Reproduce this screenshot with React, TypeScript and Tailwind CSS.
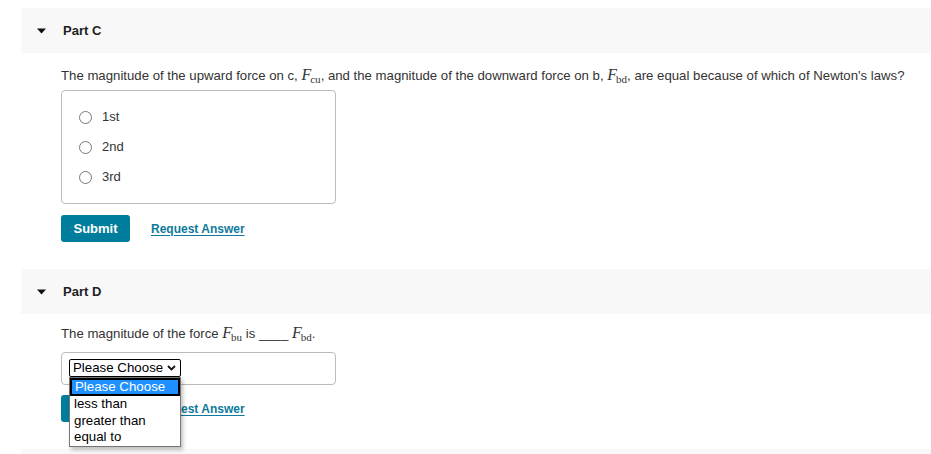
import React from "react";

const Caret = () => (
  <svg width="9" height="6" viewBox="0 0 9 6" className="shrink-0">
    <path d="M0 0.5 H9 L4.5 5.5 Z" fill="#111" />
  </svg>
);

// italic F with roman subscript, like the MathJax rendering
const F = ({ sub }: { sub: string }) => (
  <span className="font-['Liberation_Serif',serif] italic text-[16px]">
    F
    <sub className="not-italic text-[11px] -bottom-[0.25em] -ml-[1px]">{sub}</sub>
  </span>
);

const PartHeader = ({ label }: { label: string }) => (
  <div className="ml-[21px] h-[45px] bg-[#f8f8f8] flex items-center">
    <div className="ml-[16px] mr-[17px] flex">
      <Caret />
    </div>
    <span className="text-[13px] font-bold text-[#222]">{label}</span>
  </div>
);

const Actions = () => (
  <div className="flex items-center">
    <button className="w-[69px] h-[27px] rounded-[3px] bg-[#007c9d] text-white text-[13px] font-bold">
      Submit
    </button>
    <a className="ml-[21px] text-[12px] font-bold text-[#0d7a9b] underline underline-offset-[2px]">
      Request Answer
    </a>
  </div>
);

const Radio = ({ label }: { label: string }) => (
  <label className="h-[30px] flex items-center pl-[17px]">
    <span className="w-[13px] h-[13px] rounded-full border border-[#777] bg-white" />
    <span className="ml-[10px] text-[13px] text-[#333]">{label}</span>
  </label>
);

export default function App() {
  const options = ["Please Choose", "less than", "greater than", "equal to"];

  return (
    <div className="min-h-[454px] w-full bg-white pt-[8px] font-['Liberation_Sans',Arial,sans-serif] text-[#333] overflow-hidden">
      {/* Part C */}
      <PartHeader label="Part C" />
      <div className="pl-[61px]">
        <p className="mt-[12px] h-[20px] leading-[20px] text-[13.2px] whitespace-nowrap">
          The magnitude of the upward force on c, <F sub="cu" />, and the magnitude of the downward force on b,{" "}
          <F sub="bd" />, are equal because of which of Newton's laws?
        </p>
        <div className="mt-[5px] w-[275px] rounded-[4px] border border-[#bcbcbc] py-[11px]">
          <Radio label="1st" />
          <Radio label="2nd" />
          <Radio label="3rd" />
        </div>
        <div className="mt-[11px]">
          <Actions />
        </div>
      </div>

      {/* Part D */}
      <div className="mt-[27px]">
        <PartHeader label="Part D" />
      </div>
      <div className="pl-[61px]">
        <p className="mt-[10px] h-[18px] leading-[18px] text-[13.2px]">
          The magnitude of the force <F sub="bu" /> is ____ <F sub="bd" />.
        </p>
        <div className="mt-[10px] w-[275px] h-[33px] rounded-[4px] border border-[#bcbcbc] pl-[7px] pt-[6px]">
          <div className="relative z-10 w-[112px]">
            <div className="h-[18px] rounded-[2px] border border-black bg-white flex items-center justify-between pl-[3px] pr-[4px] text-[13.3px] leading-none text-black">
              <span>Please Choose</span>
              <svg width="9" height="6" viewBox="0 0 9 6">
                <path d="M1 1 L4.5 4.5 L8 1" fill="none" stroke="#111" strokeWidth="1.8" />
              </svg>
            </div>
            <ul className="absolute left-0 top-full w-[112px] border border-[#767676] bg-white shadow-[2px_3px_4px_rgba(0,0,0,0.25)] text-[13.3px] text-black">
              {options.map((o, i) => (
                <li
                  key={o}
                  className={
                    i === 0
                      ? "h-[18px] leading-[14px] px-[3px] bg-[#1e90ff] text-white border-2 border-black"
                      : "h-[16.5px] leading-[16px] px-[4px]"
                  }
                >
                  {o}
                </li>
              ))}
            </ul>
          </div>
        </div>
        <div className="mt-[10px]">
          <Actions />
        </div>
      </div>
      <div className="mt-[27px] ml-[21px] h-[20px] bg-[#f8f8f8]" />
    </div>
  );
}
